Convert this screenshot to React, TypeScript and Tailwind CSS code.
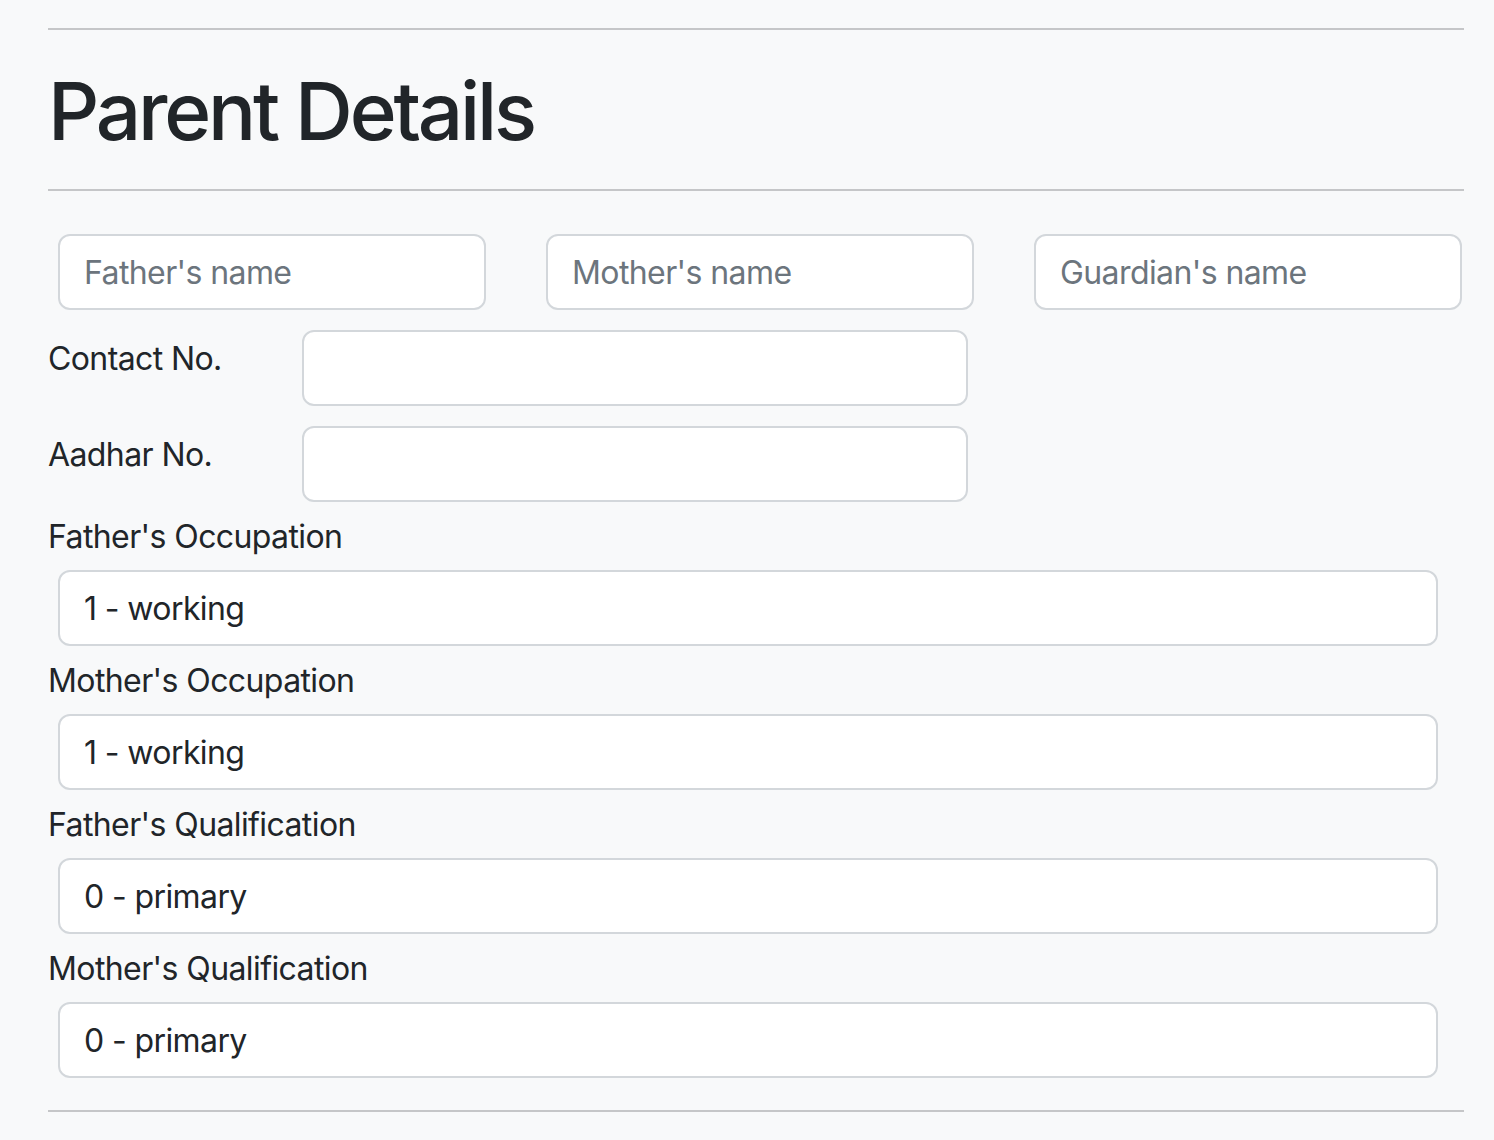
import React from "react";

const font = { fontFamily: "Inter, 'Noto Sans', 'Liberation Sans', sans-serif" };

function Field({ placeholder, value, className = "" }: { placeholder?: string; value?: string; className?: string }) {
  return (
    <input
      readOnly
      placeholder={placeholder}
      defaultValue={value}
      className={
        "block h-[76px] rounded-[12px] border-2 border-[#d3d7db] bg-white px-6 text-[32px] leading-[48px] tracking-[-0.6px] text-[#212529] placeholder:text-[#6c757d] outline-none " +
        className
      }
      style={font}
    />
  );
}

function Hr({ className = "" }: { className?: string }) {
  return <div className={"h-[2px] w-full bg-[#c5c6c8] " + className} />;
}

export default function App() {
  const rows: [string, string][] = [
    ["Father's Occupation", "1 - working"],
    ["Mother's Occupation", "1 - working"],
    ["Father's Qualification", "0 - primary"],
    ["Mother's Qualification", "0 - primary"],
  ];
  return (
    <div className="min-h-[1140px] bg-[#f8f9fa] text-[#212529]" style={font}>
      <div className="ml-12 w-[1416px] pt-[28px]">
        <Hr />
        <h1 className="mt-[33px] text-[80px] font-medium leading-[96px] tracking-[-3.2px]">Parent Details</h1>
        <Hr className="mt-[30px]" />
        <div className="ml-[10px] mt-[43px] grid w-[1404px] grid-cols-3 gap-[60px]">
          <Field placeholder="Father's name" className="w-full" />
          <Field placeholder="Mother's name" className="w-full" />
          <Field placeholder="Guardian's name" className="w-full" />
        </div>
        <div className="mt-[20px] flex items-start">
          <label className="mt-[5px] w-[254px] text-[32px] leading-[48px] tracking-[-0.6px]">Contact No.</label>
          <Field className="w-[666px]" />
        </div>
        <div className="mt-[20px] flex items-start">
          <label className="mt-[5px] w-[254px] text-[32px] leading-[48px] tracking-[-0.6px]">Aadhar No.</label>
          <Field className="w-[666px]" />
        </div>
        {rows.map(([label, value]) => (
          <div key={label}>
            <label className="mt-[11px] block text-[32px] leading-[48px] tracking-[-0.6px]">{label}</label>
            <Field value={value} className="ml-[10px] mt-[9px] w-[1380px]" />
          </div>
        ))}
        <Hr className="mt-[32px]" />
      </div>
    </div>
  );
}
